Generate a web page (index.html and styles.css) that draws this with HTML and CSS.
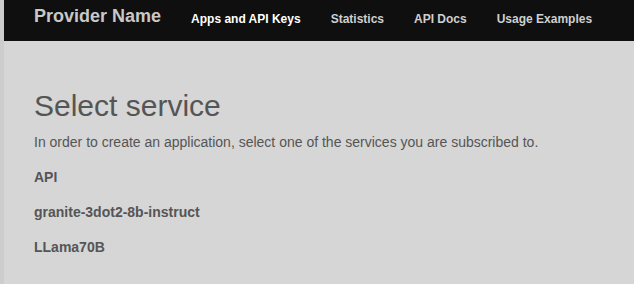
FILE: index.html
```html
<!DOCTYPE html>
<html>
<head>
<meta charset="utf-8">
<link rel="stylesheet" href="styles.css">
</head>
<body>
<header class="topbar">
  <div class="brand">Provider Name</div>
  <nav class="nav">
    <a class="nav-item active">Apps and API Keys</a>
    <a class="nav-item">Statistics</a>
    <a class="nav-item">API Docs</a>
    <a class="nav-item">Usage Examples</a>
  </nav>
</header>
<main class="content">
  <h1 class="title">Select service</h1>
  <p class="lead">In order to create an application, select one of the services you are subscribed to.</p>
  <ul class="services">
    <li>API</li>
    <li>granite-3dot2-8b-instruct</li>
    <li>LLama70B</li>
  </ul>
</main>
</body>
</html>
```
FILE: styles.css
```css
html, body {
  margin: 0;
  padding: 0;
  height: 100%;
}
body {
  font-family: "Liberation Sans", Arial, sans-serif;
  background: #d6d6d6;
  border-left: 4px solid #cdcdcd;
  box-sizing: border-box;
  overflow: hidden;
}
.topbar {
  height: 41px;
  background: #0f0f0f;
  margin-left: -4px;
  border-left: 4px solid #050505;
  display: flex;
  align-items: center;
  padding-left: 30px;
}
.brand {
  color: #c8c8c8;
  font-weight: bold;
  font-size: 18px;
  margin-top: -9px;
  margin-right: 30px;
}
.nav {
  display: flex;
  gap: 30px;
  margin-top: -3px;
}
.nav-item {
  color: #cfcfcf;
  font-weight: bold;
  font-size: 12px;
}
.nav-item.active {
  color: #ffffff;
}
.content {
  padding: 48px 0 0 30px;
  color: #555555;
}
.title {
  margin: 0;
  font-weight: normal;
  font-size: 30px;
  line-height: 34px;
}
.lead {
  margin: 9px 0 0;
  font-size: 14px;
  line-height: 20px;
}
.services {
  list-style: none;
  margin: 15px 0 0;
  padding: 0;
  display: flex;
  flex-direction: column;
  gap: 15px;
}
.services li {
  font-weight: bold;
  font-size: 14px;
  line-height: 20px;
}
```
